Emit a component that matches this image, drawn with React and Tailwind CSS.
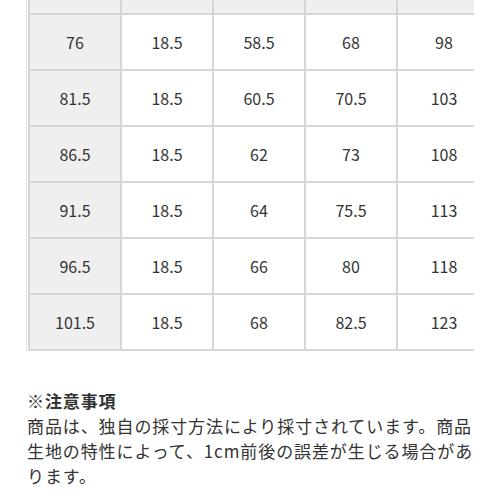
import React from "react";

const rows = [
  ["76", "18.5", "58.5", "68", "98"],
  ["81.5", "18.5", "60.5", "70.5", "103"],
  ["86.5", "18.5", "62", "73", "108"],
  ["91.5", "18.5", "64", "75.5", "113"],
  ["96.5", "18.5", "66", "80", "118"],
  ["101.5", "18.5", "68", "82.5", "123"],
];

const font = { fontFamily: '"Noto Sans CJK JP", "Noto Sans", sans-serif' };

export default function App() {
  return (
    <div className="w-[500px] h-[500px] bg-white overflow-hidden text-[#333]" style={font}>
      <div className="ml-[26px] w-[447px] border-l border-[#e4e4e4]">
        <div className="ml-px border-l-2 border-[#d6d6d6]">
          <div className="grid grid-cols-[92px_92px_92px_92px_76px]">
            {[0, 1, 2, 3, 4].map((i) => (
              <div
                key={"h" + i}
                className={`h-[15px] bg-[#efefef] border-b-2 border-[#d6d6d6] ${i < 4 ? "border-r-2" : ""}`}
              />
            ))}
            {rows.map((r, ri) =>
              r.map((v, ci) => (
                <div
                  key={ri + "-" + ci}
                  className={`h-[56px] flex items-center justify-center text-[16px] border-b-2 border-[#d6d6d6] ${
                    ci < 4 ? "border-r-2" : "pl-[16px]"
                  } ${ci === 0 ? "bg-[#efefef]" : "bg-white"}`}
                >
                  {v}
                </div>
              ))
            )}
          </div>
        </div>
      </div>
      <div className="mt-[37px] ml-[27px] text-[17px] leading-[25px] tracking-[0.9px] whitespace-nowrap text-[#333]">
        <div className="font-bold">※注意事項</div>
        <div>商品は、独自の採寸方法により採寸されています。商品</div>
        <div>生地の特性によって、1cm前後の誤差が生じる場合があ</div>
        <div>ります。</div>
      </div>
    </div>
  );
}
